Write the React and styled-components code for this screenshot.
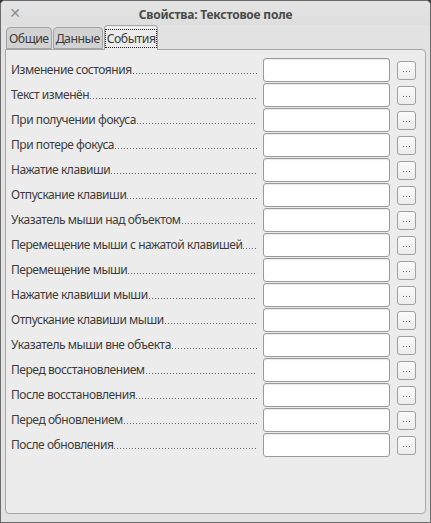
import React from "react";
import styled, { createGlobalStyle } from "styled-components";

const Global = createGlobalStyle`
  html, body { margin: 0; padding: 0; background: #3a3a3a; }
  body { font-family: "Noto Sans", "DejaVu Sans", sans-serif; }
`;

const Window = styled.div`
  box-sizing: border-box;
  width: 431px;
  height: 523px;
  background: #ececec;
  border: 1px solid #6b6b6b;
  border-radius: 5px 5px 0 0;
  display: flex;
  flex-direction: column;
  overflow: hidden;
`;

const TitleBar = styled.div`
  height: 24px;
  display: grid;
  grid-template-columns: 28px 1fr 28px;
  align-items: center;
  background: linear-gradient(#e4e4e4, #dedede);
`;

const Close = styled.span`
  color: #8e8e8e;
  font-size: 14px;
  font-weight: bold;
  text-align: center;
  line-height: 1;
`;

const Title = styled.span`
  text-align: center;
  font-size: 12px;
  font-weight: bold;
  color: #4a4a4a;
  letter-spacing: -0.2px;
  padding-top: 2px;
`;

const Body = styled.div`
  flex: 1;
  display: flex;
  flex-direction: column;
  padding: 0 4px 8px 4px;
  background: #e2e2e2;
`;

const Tabs = styled.div`
  display: flex;
  align-items: flex-end;
  gap: 1px;
  padding-left: 1px;
  height: 24px;
  position: relative;
  z-index: 1;
`;

const Tab = styled.div`
  box-sizing: border-box;
  height: ${(p) => (p.$active ? "25px" : "22px")};
  padding: 0 1px 0 1px;
  border: 1px solid #a3a3a3;
  border-bottom: ${(p) => (p.$active ? "none" : "1px solid #a3a3a3")};
  border-radius: 4px 4px 0 0;
  background: ${(p) => (p.$active ? "#ececec" : "#d2d2d2")};
  font-size: 12.3px;
  letter-spacing: -0.5px;
  color: #3c3c3c;
  display: flex;
  align-items: center;
  margin-bottom: ${(p) => (p.$active ? "-1px" : "0")};
`;

const TabText = styled.span`
  padding: 0 1px;
  line-height: 17px;
  outline: ${(p) => (p.$focus ? "1px dotted #222" : "none")};
`;

const Panel = styled.div`
  flex: 1;
  box-sizing: border-box;
  border: 1px solid #a7a7a7;
  border-radius: 0 4px 4px 4px;
  background: #ececec;
  padding: 8px 9px 0 5px;
  display: flex;
  flex-direction: column;
  gap: 1px;
`;

const Row = styled.div`
  display: flex;
  align-items: center;
  height: 24px;
`;

const Label = styled.div`
  width: 252px;
  flex: none;
  display: flex;
  align-items: flex-end;
  padding-right: 6px;
  box-sizing: border-box;
  white-space: nowrap;
  font-size: 12px;
  line-height: 16px;
  color: #3c3c3c;
  letter-spacing: -0.45px;
`;

const Leader = styled.span`
  flex: 1;
  height: 1px;
  margin: 0 0 4px 1px;
  background-image: linear-gradient(to right, #6a6a6a 1px, transparent 1px);
  background-size: 3px 1px;
  background-repeat: repeat-x;
`;

const Field = styled.div`
  box-sizing: border-box;
  width: 128px;
  height: 24px;
  background: #fff;
  border: 1px solid #9a9a9a;
  border-radius: 3px;
  box-shadow: inset 0 1px 1px rgba(0, 0, 0, 0.08);
`;

const DotButton = styled.div`
  box-sizing: border-box;
  width: 19px;
  height: 19px;
  margin-left: 7px;
  border: 1px solid #a0a0a0;
  border-radius: 3px;
  background: linear-gradient(#fbfbfb, #ececec);
  display: flex;
  align-items: center;
  justify-content: center;
`;

const ButtonDots = styled.span`
  width: 8px;
  height: 1px;
  margin-top: 3px;
  background-image: linear-gradient(to right, #6a6a8a 1px, transparent 1px);
  background-size: 3px 1px;
`;

const events = [
  "Изменение состояния",
  "Текст изменён",
  "При получении фокуса",
  "При потере фокуса",
  "Нажатие клавиши",
  "Отпускание клавиши",
  "Указатель мыши над объектом",
  "Перемещение мыши с нажатой клавишей",
  "Перемещение мыши",
  "Нажатие клавиши мыши",
  "Отпускание клавиши мыши",
  "Указатель мыши вне объекта",
  "Перед восстановлением",
  "После восстановления",
  "Перед обновлением",
  "После обновления",
];

export default function App() {
  return (
    <>
      <Global />
      <Window>
        <TitleBar>
          <Close>✕</Close>
          <Title>Свойства: Текстовое поле</Title>
          <span />
        </TitleBar>
        <Body>
          <Tabs>
            <Tab><TabText>Общие</TabText></Tab>
            <Tab><TabText>Данные</TabText></Tab>
            <Tab $active><TabText $focus>События</TabText></Tab>
          </Tabs>
          <Panel>
            {events.map((e) => (
              <Row key={e}>
                <Label>
                  <span>{e}</span>
                  <Leader />
                </Label>
                <Field />
                <DotButton title="...">
                  <ButtonDots />
                </DotButton>
              </Row>
            ))}
          </Panel>
        </Body>
      </Window>
    </>
  );
}
